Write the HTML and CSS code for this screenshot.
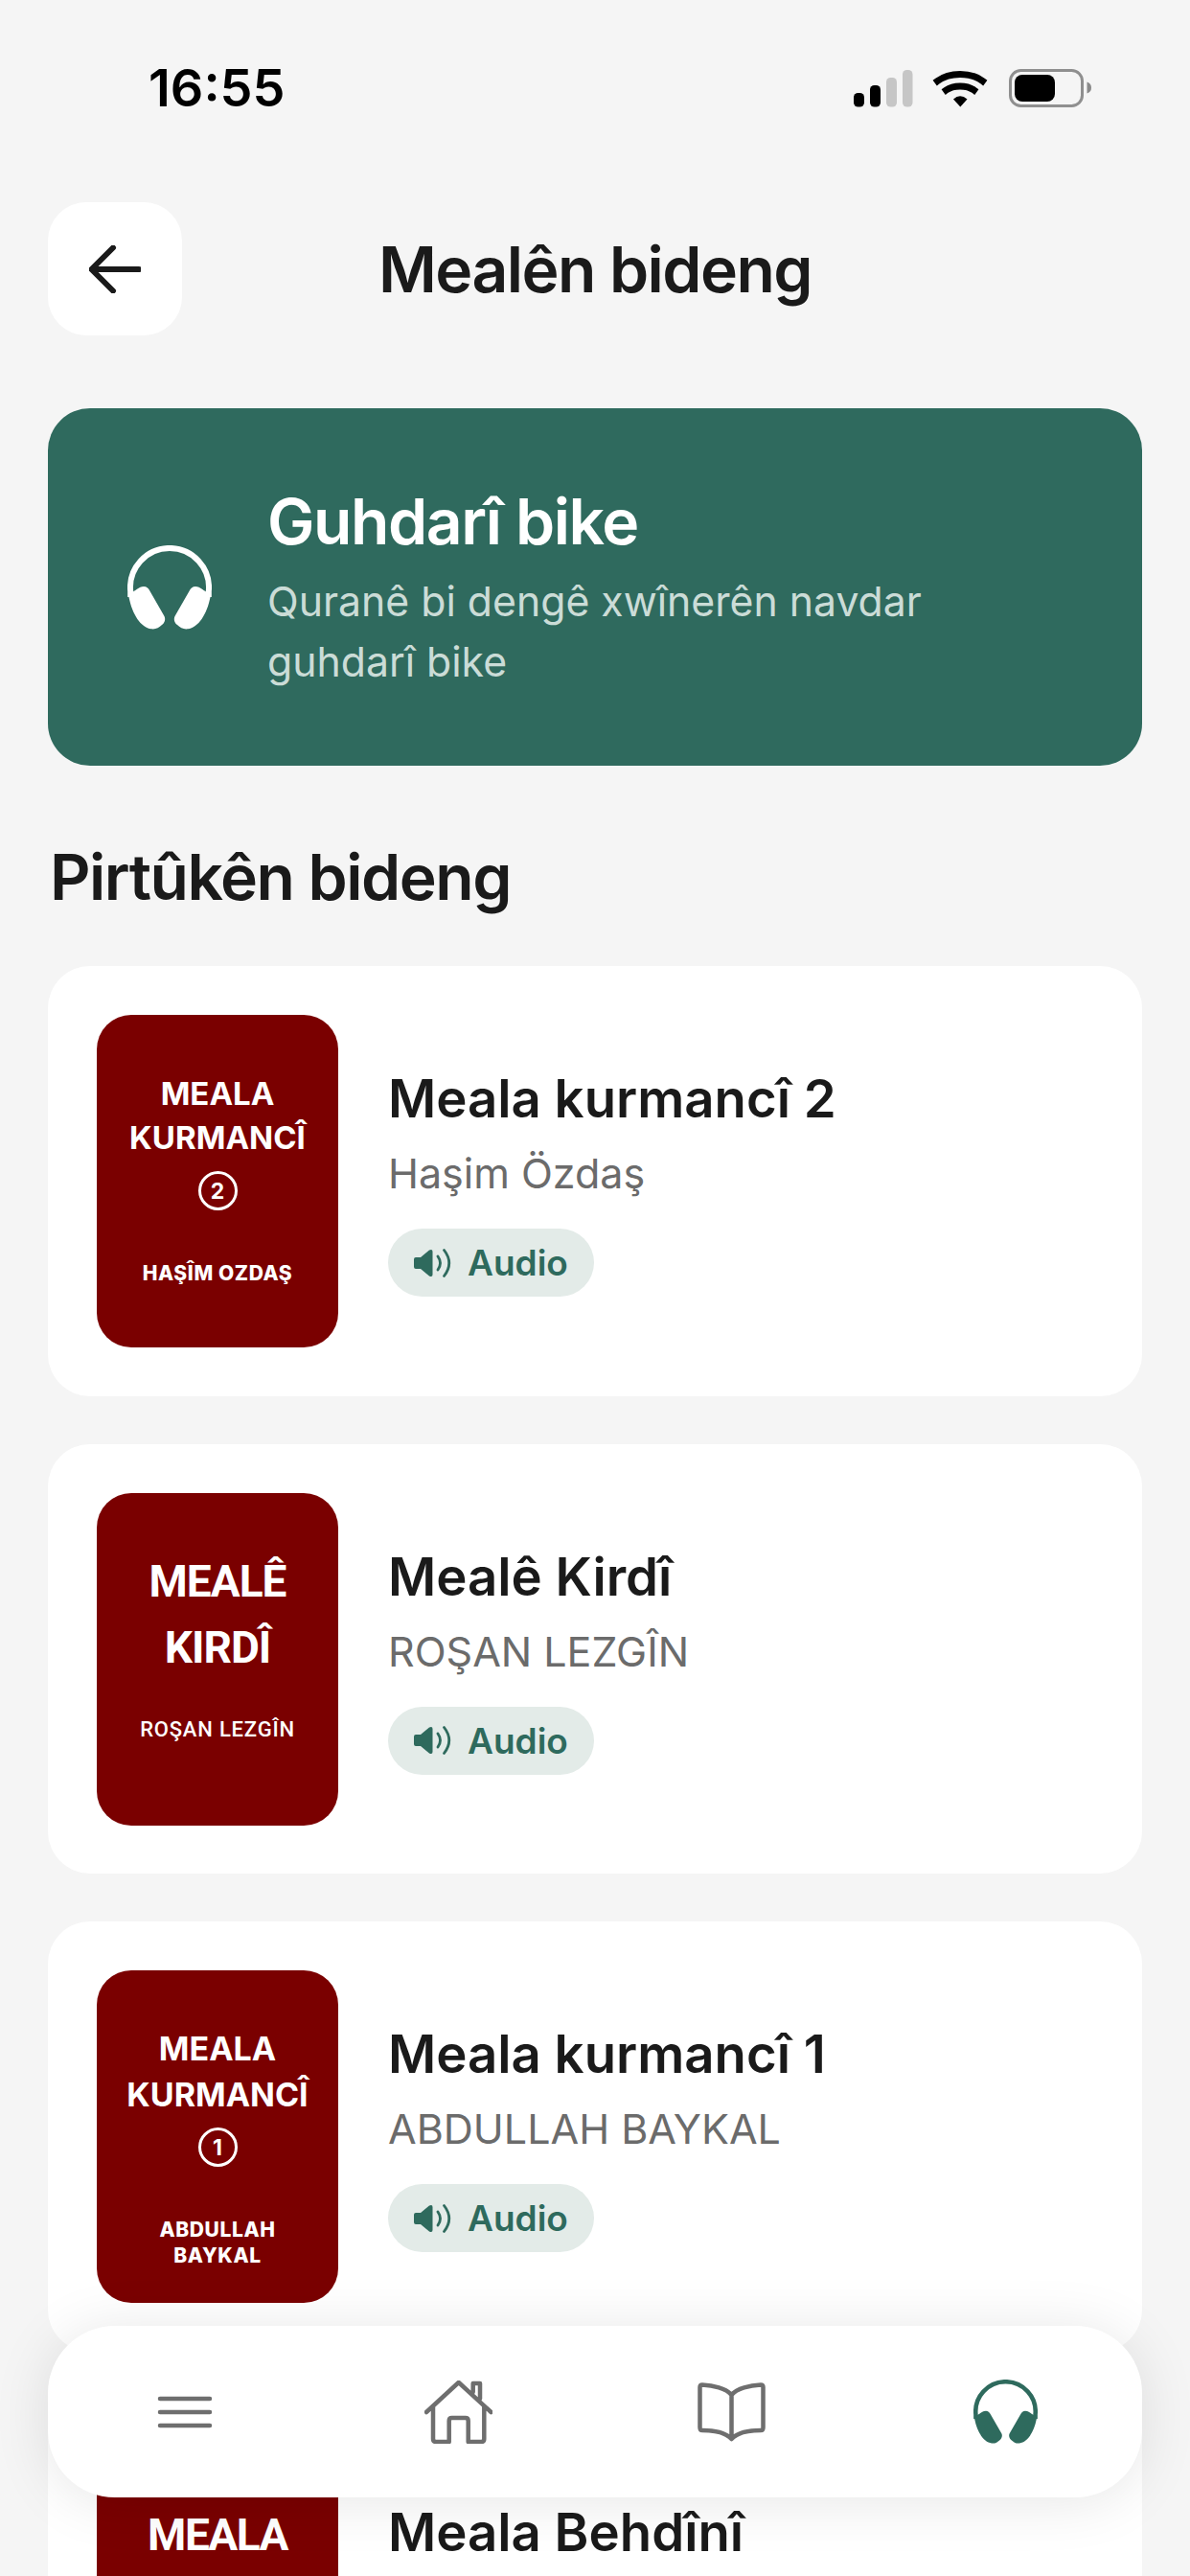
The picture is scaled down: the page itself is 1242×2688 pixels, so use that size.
FILE: index.html
```html
<!DOCTYPE html>
<html lang="ku">
<head>
<meta charset="utf-8">
<title>Mealên bideng</title>
<link rel="stylesheet" href="styles.css">
</head>
<body>
<svg class="defs" width="0" height="0" aria-hidden="true">
  <symbol id="headphones" viewBox="0 0 88 88">
    <path d="M3.200 54V48A41 41 0 1 1 84.800 48V54" fill="none" stroke="currentColor" stroke-width="6"/>
    <path fill="currentColor" d="M3 50C8 48 12 43 17 43C20 43 22 45 23 47L38.500 74C40 77 39 81 36 83C33 86 29 88 25 87.300C14 86 5 72 1.500 54Z"/>
    <path fill="currentColor" d="M85 50C80 48 76 43 71 43C68 43 66 45 65 47L49.500 74C48 77 49 81 52 83C55 86 59 88 63 87.300C74 86 83 72 86.500 54Z"/>
  </symbol>
  <symbol id="speaker" viewBox="0 0 40 30">
    <path fill="currentColor" d="M2 9H7L16 1.500Q19.500 0 19.500 3V27Q19.500 30 16 28.500L7 21H2Q0 21 0 19V11Q0 9 2 9Z"/>
    <path fill="none" stroke="currentColor" stroke-width="2.800" stroke-linecap="round" d="M25 8Q30 15 25 22M31.500 1.500Q42 15 31.500 28.500"/>
  </symbol>
</svg>
<div class="app">
  <div class="status">
    <span class="time">16:55</span>
    <svg class="status-icons" width="248" height="44" viewBox="891 70 248 44">
      <rect x="891" y="97" width="11" height="14.500" rx="4.500" fill="#000"/>
      <rect x="908" y="89" width="11" height="22.500" rx="4.500" fill="#000"/>
      <rect x="925" y="81" width="11" height="30.500" rx="4.500" fill="#c6c6c6"/>
      <rect x="942" y="73" width="10.500" height="38.500" rx="4.500" fill="#c6c6c6"/>
      <path d="M978.500 84.500C991 75 1013 75 1025.500 84.500M987.500 94C995 88.500 1009 88.500 1016.500 94" fill="none" stroke="#000" stroke-width="7" stroke-linecap="square"/>
      <path d="M995 103.500Q1002 97 1009.500 103.500L1002.300 111.500Z" fill="#000"/>
      <rect x="1054.500" y="73.500" width="75" height="37" rx="11" fill="none" stroke="#8f8f8f" stroke-width="3"/>
      <rect x="1059" y="78" width="42" height="28" rx="8" fill="#000"/>
      <path d="M1134.500 85.500Q1139 87 1139 91.500Q1139 96 1134.500 97.500Z" fill="#8a8a8a"/>
    </svg>
  </div>

  <header class="header">
    <button class="back" type="button" aria-label="Back">
      <svg width="54" height="50" viewBox="0 0 54 50"><path d="M52 25H3M25 2.500L2.500 25L25 47.500" fill="none" stroke="#1a1a1a" stroke-width="6" stroke-linecap="round" stroke-linejoin="round"/></svg>
    </button>
    <h1 class="page-title">Mealên bideng</h1>
  </header>

  <section class="hero">
    <svg class="hero-icon" width="88" height="88"><use href="#headphones"/></svg>
    <div class="hero-text">
      <h2 class="hero-title">Guhdarî bike</h2>
      <p class="hero-sub">Quranê bi dengê xwînerên navdar guhdarî bike</p>
    </div>
  </section>

  <h2 class="section-title">Pirtûkên bideng</h2>

  <div class="list">
    <article class="card">
      <div class="cover cover-a">
        <span class="c-big">MEALA</span>
        <span class="c-big">KURMANCÎ</span>
        <span class="c-num">2</span>
        <span class="c-author">HAŞÎM OZDAŞ</span>
      </div>
      <div class="info">
        <h3 class="book-title">Meala kurmancî 2</h3>
        <p class="book-author">Haşim Özdaş</p>
        <span class="badge"><svg width="40" height="30"><use href="#speaker"/></svg>Audio</span>
      </div>
    </article>
    <article class="card">
      <div class="cover cover-b">
        <span class="c-huge">MEALÊ</span>
        <span class="c-huge">KIRDÎ</span>
        <span class="c-author-b">ROŞAN LEZGÎN</span>
      </div>
      <div class="info">
        <h3 class="book-title">Mealê Kirdî</h3>
        <p class="book-author">ROŞAN LEZGÎN</p>
        <span class="badge"><svg width="40" height="30"><use href="#speaker"/></svg>Audio</span>
      </div>
    </article>
    <article class="card">
      <div class="cover cover-c">
        <span class="c-big">MEALA</span>
        <span class="c-big">KURMANCÎ</span>
        <span class="c-num">1</span>
        <span class="c-author c-author-first">ABDULLAH</span>
        <span class="c-author">BAYKAL</span>
      </div>
      <div class="info">
        <h3 class="book-title">Meala kurmancî 1</h3>
        <p class="book-author">ABDULLAH BAYKAL</p>
        <span class="badge"><svg width="40" height="30"><use href="#speaker"/></svg>Audio</span>
      </div>
    </article>
    <article class="card">
      <div class="cover cover-d">
        <span class="c-huge">MEALA</span>
      </div>
      <div class="info">
        <h3 class="book-title">Meala Behdînî</h3>
      </div>
    </article>
  </div>

  <nav class="nav">
    <a class="nav-item">
      <svg width="58" height="34" viewBox="0 0 58 34"><path d="M3 3H55M3 17H55M3 31H55" fill="none" stroke="#6e6e6e" stroke-width="4.500" stroke-linecap="round"/></svg>
    </a>
    <a class="nav-item">
      <svg width="71" height="66" viewBox="0 0 71 66"><path d="M2 33L35.700 2L69.500 33M9 27V61Q9 64 12 64H25.700V42Q25.700 39 28.700 39H42.700Q45.700 39 45.700 42V64H59.300Q62.300 64 62.300 61V27M50.700 12V3H58V19" fill="none" stroke="#6e6e6e" stroke-width="4.500" stroke-linecap="round" stroke-linejoin="round"/></svg>
    </a>
    <a class="nav-item">
      <svg width="71" height="62" viewBox="0 0 71 62"><path d="M35.500 13C30 6 16 3 5 2.500Q2.500 2.500 2.500 5V47Q2.500 50 5 50C16 50 29 52 35.500 59C42 52 55 50 66 50Q68.500 50 68.500 47V5Q68.500 2.500 66 2.500C55 3 41 6 35.500 13V59" fill="none" stroke="#6e6e6e" stroke-width="4.500" stroke-linecap="round" stroke-linejoin="round"/></svg>
    </a>
    <a class="nav-item nav-active">
      <svg width="67" height="67"><use href="#headphones"/></svg>
    </a>
  </nav>
</div>
</body>
</html>
```

FILE: styles.css
```css
* { box-sizing: border-box; margin: 0; padding: 0; }
html, body { width: 1242px; height: 2688px; overflow: hidden; }
body { background: #f5f5f5; font-family: "Inter", "Noto Sans", sans-serif; color: #1a1a1a; }
.defs { position: absolute; }
.app { position: relative; width: 1242px; height: 2688px; overflow: hidden; }

.status { height: 211px; display: flex; justify-content: space-between; padding: 70px 103px 0 155px; }
.time { font-size: 54px; font-weight: 600; line-height: 44px; color: #000; letter-spacing: 0; }
.status-icons { display: block; }

.header { margin: 0 50px; height: 139px; display: grid; grid-template-columns: 140px 1fr 140px; align-items: center; }
.back { width: 140px; height: 139px; background: #fff; border: 0; border-radius: 40px; display: flex; align-items: center; justify-content: center; }
.page-title { font-size: 66px; font-weight: 600; text-align: center; line-height: 80px; letter-spacing: -1.550px; }

.hero { margin: 76px 50px 0; height: 373px; background: #2f6a5e; border-radius: 44px; display: flex; align-items: center; padding-left: 83px; gap: 58px; }
.hero-icon { color: #fff; flex: none; }
.hero-title { font-size: 66px; font-weight: 600; line-height: 80px; color: #fff; letter-spacing: -1.400px; }
.hero-sub { width: 740px; font-size: 42.750px; line-height: 63px; color: #cbdcd7; margin-top: 12px; }

.section-title { margin: 76px 52px 0; font-size: 66px; font-weight: 600; line-height: 80px; letter-spacing: -1.500px; }

.list { margin: 53px 50px 0; display: flex; flex-direction: column; gap: 50px; }
.card { background: #fff; border-radius: 44px; padding: 51px; height: 448.500px; flex: none; display: flex; align-items: flex-start; gap: 52px; }

.cover { width: 252px; height: 347px; flex: none; background: #7a0000; border-radius: 36px; color: #fff; display: flex; flex-direction: column; align-items: center; font-weight: 700; font-family: "Inter", sans-serif; }
.cover-a { padding-top: 59px; }
.cover-b { padding-top: 58.500px; }
.cover-c { padding-top: 58px; }
.cover-d { padding-top: 60px; }
.c-big { font-size: 33px; line-height: 46px; }
.cover-c .c-big { line-height: 48px; font-size: 34px; }
.c-huge { font-size: 46px; line-height: 69px; font-family: "Roboto", sans-serif; font-weight: 700; letter-spacing: -1px; }
.cover-d .c-huge { line-height: 60px; letter-spacing: -1.500px; }
.c-num { width: 41px; height: 41px; border: 3px solid #fff; border-radius: 50%; font-size: 23px; display: flex; align-items: center; justify-content: center; margin-top: 12px; }
.cover-c .c-num { margin-top: 10px; }
.c-author { font-size: 21px; font-weight: 800; line-height: 27px; letter-spacing: 0.600px; }
.cover-a .c-author { line-height: 24px; margin-top: 54px; }
.c-author-first { margin-top: 52px; }
.c-author-b { font-family: "Roboto", sans-serif; font-size: 22px; font-weight: 500; line-height: 24px; letter-spacing: 0.800px; margin-top: 39px; }

.info { padding-top: 55px; display: flex; flex-direction: column; align-items: flex-start; }
.book-title { font-size: 54.500px; font-weight: 600; line-height: 64px; }
.book-author { font-size: 43px; line-height: 50px; color: #6b6b6b; margin-top: 21px; }
.badge { margin-top: 33px; height: 71px; padding: 0 27px; background: #e3ebe8; border-radius: 36px; display: inline-flex; align-items: center; gap: 16px; color: #2e6a5d; font-size: 37px; font-weight: 600; }

.nav { position: absolute; left: 50px; top: 2427px; width: 1142px; height: 179px; background: #fff; border-radius: 70px; display: grid; grid-template-columns: repeat(4, 1fr); align-items: center; justify-items: center; box-shadow: 0 4px 60px rgba(0, 0, 0, 0.1); }
.nav-item { display: flex; }
.nav-active { color: #2e6a5d; }
```
